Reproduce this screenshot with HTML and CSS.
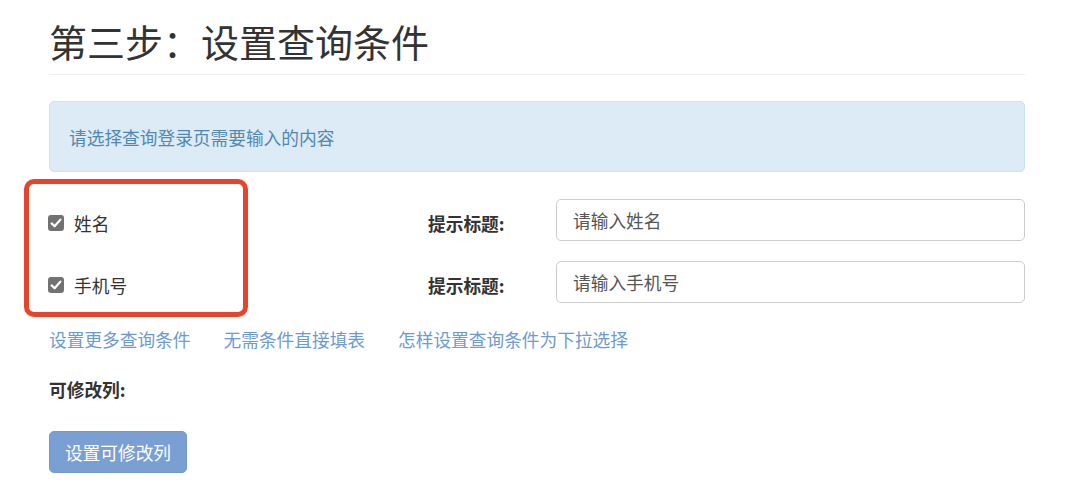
FILE: index.html
```html
<!DOCTYPE html>
<html lang="zh-CN">
<head>
<meta charset="utf-8">
<title>第三步：设置查询条件</title>
<link rel="stylesheet" href="styles.css">
</head>
<body>
<div class="page">
  <h2 class="title">第三步：设置查询条件</h2>
  <div class="alert">请选择查询登录页需要输入的内容</div>

  <div class="conditions">
    <div class="row">
      <label class="check"><span class="box"><svg viewBox="0 0 16 16" width="16" height="16"><path d="M3.6 8.4 L6.6 11.3 L12.4 4.6" fill="none" stroke="#fff" stroke-width="2.2" stroke-linecap="round" stroke-linejoin="round"/></svg></span>姓名</label>
      <span class="hint">提示标题:</span>
      <div class="input">请输入姓名</div>
    </div>
    <div class="row">
      <label class="check"><span class="box"><svg viewBox="0 0 16 16" width="16" height="16"><path d="M3.6 8.4 L6.6 11.3 L12.4 4.6" fill="none" stroke="#fff" stroke-width="2.2" stroke-linecap="round" stroke-linejoin="round"/></svg></span>手机号</label>
      <span class="hint">提示标题:</span>
      <div class="input">请输入手机号</div>
    </div>
    <div class="highlight"></div>
  </div>

  <div class="links">
    <a>设置更多查询条件</a>
    <a>无需条件直接填表</a>
    <a>怎样设置查询条件为下拉选择</a>
  </div>

  <div class="editable">可修改列:</div>
  <button class="btn">设置可修改列</button>
</div>
</body>
</html>
```

FILE: styles.css
```css
* { box-sizing: border-box; }
body {
  margin: 0;
  background: #fff;
  font-family: "Noto Sans CJK SC", "Noto Sans", sans-serif;
  font-size: 17.7px;
  color: #333;
}
.page {
  padding: 20px 55px 0 49px;
}
.title {
  margin: 0;
  font-size: 38px;
  font-weight: 400;
  line-height: 42px;
  color: #333;
  padding-bottom: 12px;
  border-bottom: 1px solid #eee;
}
.alert {
  margin-top: 26px;
  height: 71px;
  display: flex;
  align-items: center;
  padding: 0 19px;
  background: #dcebf6;
  border: 1px solid #c7e4f0;
  border-radius: 5px;
  color: #5188b1;
  font-size: 17.7px;
}
.conditions {
  position: relative;
  margin-top: 27px;
}
.row {
  display: grid;
  grid-template-columns: 379px 128px 1fr;
  align-items: center;
  height: 42px;
}
.row + .row { margin-top: 20px; }
.check {
  display: flex;
  align-items: center;
  gap: 10px;
  margin-left: -1px;
  padding-top: 5px;
  color: #333;
}
.box {
  width: 16px;
  height: 16px;
  border-radius: 3px;
  background: #727272;
  display: flex;
}
.hint {
  font-weight: 700;
  padding-top: 5px;
  color: #333;
}
.input {
  height: 42px;
  border: 1px solid #ccc;
  border-radius: 5px;
  padding: 0 16px;
  display: flex;
  align-items: center;
  color: #555;
}
.highlight {
  position: absolute;
  left: -25px;
  top: -20px;
  width: 224px;
  height: 138px;
  border: 5px solid #e8432b;
  border-radius: 10px;
  pointer-events: none;
}
.links {
  margin-top: 24px;
  display: flex;
  gap: 33px;
  line-height: 24px;
}
.links a {
  color: #6c9ad2;
  text-decoration: none;
}
.editable {
  margin-top: 26px;
  line-height: 24px;
  font-weight: 700;
  color: #333;
}
.btn {
  display: block;
  margin-top: 30px;
  width: 138px;
  height: 42px;
  border: 1px solid #7099cf;
  border-radius: 5px;
  background: #7a9fd3;
  color: #fff;
  font-family: inherit;
  font-size: 17.7px;
  padding: 0;
}
```
